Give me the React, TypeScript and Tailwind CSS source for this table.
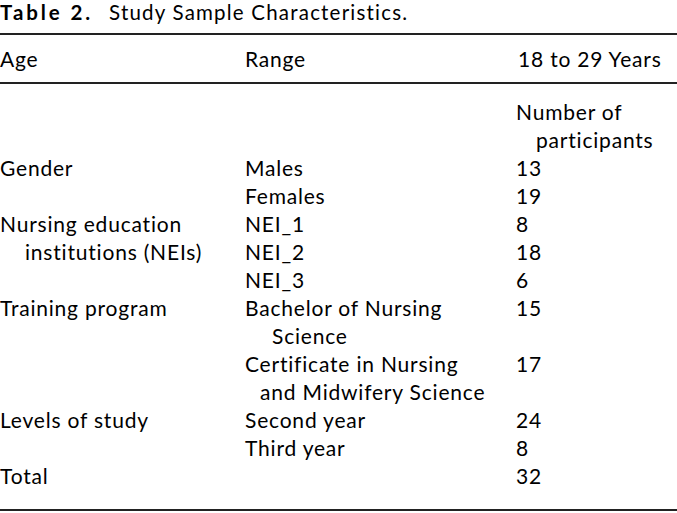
import React from 'react';

// each line of the body: [age column, range column, count column]
// an object means the text is a wrapped continuation with its own indent
type Cell = string | { text: string; indent: string };
type Line = [Cell, Cell, Cell];

const lines: Line[] = [
  ['', '', 'Number of'],
  ['', '', { text: 'participants', indent: 'pl-[20px]' }],
  ['Gender', 'Males', '13'],
  ['', 'Females', '19'],
  ['Nursing education', 'NEI_1', '8'],
  [{ text: 'institutions (NEIs)', indent: 'pl-[25px]' }, 'NEI_2', '18'],
  ['', 'NEI_3', '6'],
  ['Training program', 'Bachelor of Nursing', '15'],
  ['', { text: 'Science', indent: 'pl-[27px]' }, ''],
  ['', 'Certificate in Nursing', '17'],
  ['', { text: 'and Midwifery Science', indent: 'pl-[15px]' }, ''],
  ['Levels of study', 'Second year', '24'],
  ['', 'Third year', '8'],
  ['Total', '', '32'],
];

const TableCell = ({ c }: { c: Cell }) => {
  if (typeof c === 'string') return <div className="whitespace-nowrap h-[28px]">{c}</div>;
  return <div className={`whitespace-nowrap h-[28px] ${c.indent}`}>{c.text}</div>;
};

export default function App() {
  return (
    <div className="w-[677px] h-[513px] bg-white text-black font-['Lato',sans-serif] text-[21px] leading-[28px] tracking-[0.8px] overflow-hidden">
      <div className="h-[33px] text-[20.5px] leading-[24px] whitespace-nowrap">
        <span className="font-bold tracking-[2.9px]">Table 2.</span>
        <span className="ml-[16px] tracking-[1.2px]">Study Sample Characteristics.</span>
      </div>
      <div className="border-t-2 border-[#222]" />
      <div className="grid grid-cols-[245px_271px_1fr] h-[47px] items-center">
        <div>Age</div>
        <div>Range</div>
        <div className="pl-[2px]">18 to 29 Years</div>
      </div>
      <div className="border-t-2 border-[#222]" />
      <div className="grid grid-cols-[245px_271px_1fr] pt-[14px] pb-[19px]">
        {lines.map((l, i) => (
          <React.Fragment key={i}>
            <TableCell c={l[0]} />
            <TableCell c={l[1]} />
            <TableCell c={l[2]} />
          </React.Fragment>
        ))}
      </div>
      <div className="border-t-2 border-[#222]" />
    </div>
  );
}
